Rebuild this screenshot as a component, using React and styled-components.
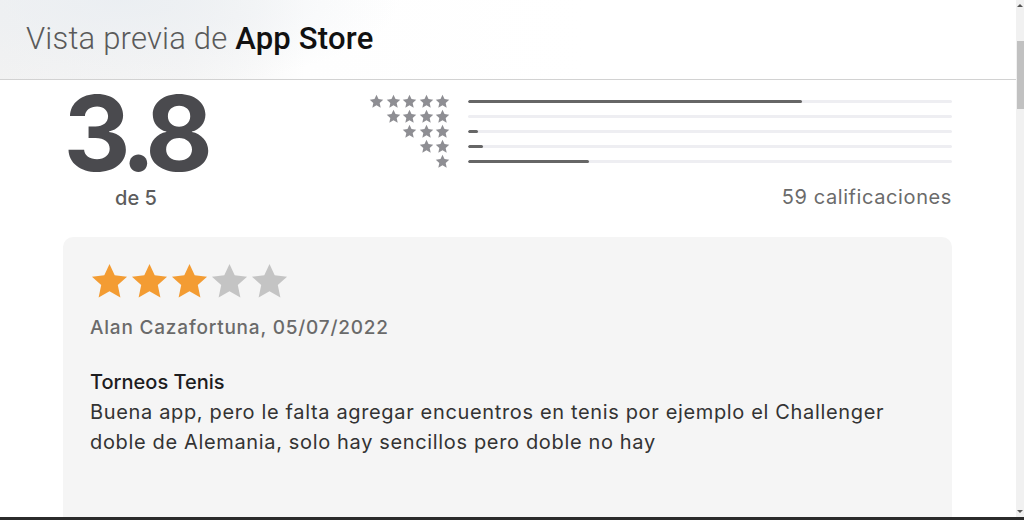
import React from 'react';
import styled, { createGlobalStyle } from 'styled-components';

const GlobalStyle = createGlobalStyle`
  html, body {
    margin: 0;
    padding: 0;
    background: #fff;
    overflow: hidden;
  }
  body {
    font-family: Inter, Roboto, "Liberation Sans", sans-serif;
  }
`;

const Frame = styled.div`
  width: 1024px;
  height: 520px;
  box-sizing: border-box;
  border-bottom: 3px solid #2b2b2b;
  display: flex;
  overflow: hidden;
`;

const Main = styled.div`
  flex: 1;
  display: flex;
  flex-direction: column;
  min-width: 0;
`;

const Header = styled.header`
  height: 80px;
  flex-shrink: 0;
  box-sizing: border-box;
  border-bottom: 1px solid #d2d2d2;
  display: flex;
  align-items: center;
  padding: 0 0 2px 26px;
  background:
    radial-gradient(ellipse 280px 90px at 120px 0px, rgba(234, 238, 242, 0.9), rgba(255, 255, 255, 0) 100%),
    linear-gradient(90deg, #f2f2f2 0%, #f5f5f5 18%, #f9f9f9 25%, #fefefe 30%, #fff 58%);
`;

const Title = styled.h1`
  margin: 0;
  font-family: Roboto, "Liberation Sans", sans-serif;
  font-size: 31px;
  font-weight: 300;
  color: #5a5a5a;
  letter-spacing: 0.2px;

  b {
    font-weight: 500;
    color: #111;
  }
`;

const Content = styled.div`
  padding: 0 64px 0 63px;
  display: flex;
  flex-direction: column;
`;

const Summary = styled.section`
  display: flex;
  justify-content: space-between;
  align-items: flex-start;
  height: 157px;
`;

const ScoreBlock = styled.div`
  display: flex;
  flex-direction: column;
  align-items: center;
  width: 146px;
`;

const Score = styled.div`
  font-size: 104px;
  font-weight: 700;
  letter-spacing: -7.5px;
  line-height: 80px;
  color: #4a4a4e;
  margin-top: 13px;
  padding-right: 3px;
`;

const OutOf = styled.div`
  font-size: 20px;
  font-weight: 500;
  color: #5c5c5c;
  margin-top: 13px;
`;

const Histogram = styled.div`
  width: 584px;
  display: flex;
  flex-direction: column;
  padding-top: 14px;
`;

const HistRow = styled.div`
  display: flex;
  align-items: center;
  height: 15px;
`;

const MiniStars = styled.div`
  width: 82px;
  display: flex;
  justify-content: flex-end;
  gap: 1.5px;
`;

const Track = styled.div`
  flex: 1;
  height: 3px;
  margin-left: 18px;
  background: #eeeef2;
  border-radius: 2px;
  overflow: hidden;
`;

const Fill = styled.div`
  height: 100%;
  background: #666;
  border-radius: 2px;
`;

const Count = styled.div`
  align-self: flex-end;
  margin-top: 16px;
  font-size: 20px;
  letter-spacing: 0.6px;
  color: #6b6b6b;
`;

const Card = styled.article`
  background: #f5f5f5;
  border-radius: 10px;
  padding: 25px 27px 0;
  height: 300px;
`;

const BigStars = styled.div`
  display: flex;
  gap: 1px;
`;

const Author = styled.div`
  margin-top: 15px;
  font-size: 19px;
  font-weight: 500;
  letter-spacing: 0.8px;
  color: #6a6a6a;
`;

const ReviewTitle = styled.h2`
  margin: 31px 0 0;
  font-size: 20px;
  font-weight: 500;
  color: #1d1d1f;
`;

const Body = styled.p`
  margin: 3px 0 0;
  font-size: 20px;
  line-height: 30px;
  letter-spacing: 0.65px;
  color: #333;
  max-width: 822px;
`;

const Scrollbar = styled.div`
  width: 8px;
  background: #f1f1f1;
  display: flex;
  flex-direction: column;
  align-items: center;
  padding: 4px 0;
`;

const Thumb = styled.div`
  width: 7px;
  height: 68px;
  margin-top: 34px;
  background: #c1c1c1;
  margin-bottom: auto;
`;

const Arrow = styled.div`
  width: 0;
  height: 0;
  border-left: 3px solid transparent;
  border-right: 3px solid transparent;
  ${(p) => (p.down ? 'border-top: 3px solid #555;' : 'border-bottom: 3px solid #555;')}
`;

const STAR = '12,1.2 15.2,8.1 22.8,9 17.1,14.2 18.7,21.8 12,18 5.3,21.8 6.9,14.2 1.2,9 8.8,8.1';

function Star({ size, color }) {
  return (
    <svg width={size} height={size} viewBox="0 0 24 24">
      <polygon points={STAR} fill={color} />
    </svg>
  );
}

const rows = [
  { stars: 5, pct: 69 },
  { stars: 4, pct: 0 },
  { stars: 3, pct: 2 },
  { stars: 2, pct: 3 },
  { stars: 1, pct: 25 },
];

export default function App() {
  return (
    <>
      <GlobalStyle />
      <Frame>
        <Main>
          <Header>
            <Title>
              Vista previa de <b>App Store</b>
            </Title>
          </Header>
          <Content>
            <Summary>
              <ScoreBlock>
                <Score>3.8</Score>
                <OutOf>de 5</OutOf>
              </ScoreBlock>
              <Histogram>
                {rows.map((r) => (
                  <HistRow key={r.stars}>
                    <MiniStars>
                      {Array.from({ length: r.stars }).map((_, i) => (
                        <Star key={i} size={15} color="#8e8e93" />
                      ))}
                    </MiniStars>
                    <Track>
                      <Fill style={{ width: `${r.pct}%` }} />
                    </Track>
                  </HistRow>
                ))}
                <Count>59 calificaciones</Count>
              </Histogram>
            </Summary>
            <Card>
              <BigStars>
                {[0, 1, 2, 3, 4].map((i) => (
                  <Star key={i} size={39} color={i < 3 ? '#f39c33' : '#c4c4c4'} />
                ))}
              </BigStars>
              <Author>Alan Cazafortuna, 05/07/2022</Author>
              <ReviewTitle>Torneos Tenis</ReviewTitle>
              <Body>
                Buena app, pero le falta agregar encuentros en tenis por ejemplo el Challenger doble de
                Alemania, solo hay sencillos pero doble no hay
              </Body>
            </Card>
          </Content>
        </Main>
        <Scrollbar>
          <Arrow />
          <Thumb />
          <Arrow down />
        </Scrollbar>
      </Frame>
    </>
  );
}
